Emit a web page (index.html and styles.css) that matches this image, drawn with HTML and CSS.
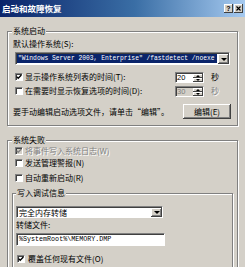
FILE: index.html
```html
<!DOCTYPE html>
<html lang="zh-CN">
<head>
    <meta charset="UTF-8">
    <meta name="viewport" content="width=device-width, initial-scale=1.0">
    <title>启动和故障恢复</title>
    <link rel="stylesheet" href="styles.css">
</head>
<body>
<div class="dialog">
    <div class="titlebar">
        <span class="title">启动和故障恢复</span>
        <div class="title-buttons">
            <span class="tbtn">?</span>
            <span class="tbtn">
                <svg width="5" height="5" viewBox="0 0 5 5"><path d="M0.5 0.5 L4.5 4.5 M4.5 0.5 L0.5 4.5" stroke="#000" stroke-width="1.1"/></svg>
            </span>
        </div>
    </div>

    <div class="content">
        <fieldset class="group group-startup">
            <legend>系统启动</legend>
            <div class="label">默认操作系统(S):</div>
            <div class="select select-os">
                <span class="select-value"><span class="selected">"Windows Server 2003, Enterprise" /fastdetect /noexe</span></span>
                <span class="drop-btn"><span class="arrow-down"></span></span>
            </div>
            <div class="row row-time">
                <span class="check checked">
                    <svg width="6" height="6" viewBox="0 0 6 6"><path d="M0.6 2.6 L2.2 4.3 L5.4 1" fill="none" stroke="#000" stroke-width="1.3"/></svg>
                </span>
                <span class="check-label">显示操作系统列表的时间(T):</span>
                <span class="spin">
                    <span class="spin-value">20</span>
                    <span class="spin-btns"><span class="spin-btn"><span class="arrow-up"></span></span><span class="spin-btn"><span class="arrow-down"></span></span></span>
                </span>
                <span class="unit">秒</span>
            </div>
            <div class="row row-recovery">
                <span class="check"></span>
                <span class="check-label">在需要时显示恢复选项的时间(D):</span>
                <span class="spin disabled">
                    <span class="spin-value">30</span>
                    <span class="spin-btns"><span class="spin-btn"><span class="arrow-up"></span></span><span class="spin-btn"><span class="arrow-down"></span></span></span>
                </span>
                <span class="unit disabled-text">秒</span>
            </div>
            <div class="row row-edit">
                <span class="hint">要手动编辑启动选项文件，请单击“编辑”。</span>
                <span class="button">编辑(E)</span>
            </div>
        </fieldset>

        <fieldset class="group group-failure">
            <legend>系统失败</legend>
            <div class="row row-small row-first">
                <span class="check checked disabled">
                    <svg width="6" height="6" viewBox="0 0 6 6"><path d="M0.6 2.6 L2.2 4.3 L5.4 1" fill="none" stroke="#808080" stroke-width="1.3"/></svg>
                </span>
                <span class="check-label disabled-text">将事件写入系统日志(W)</span>
            </div>
            <div class="row row-small row-alert">
                <span class="check"></span>
                <span class="check-label">发送管理警报(N)</span>
            </div>
            <div class="row row-small row-restart">
                <span class="check"></span>
                <span class="check-label">自动重新启动(R)</span>
            </div>

            <fieldset class="group group-debug">
                <legend>写入调试信息</legend>
                <div class="select select-dump">
                    <span class="select-value">完全内存转储</span>
                    <span class="drop-btn"><span class="arrow-down"></span></span>
                </div>
                <div class="label label-small">转储文件:</div>
                <div class="textbox">%SystemRoot%\MEMORY.DMP</div>
                <div class="row row-small row-overwrite">
                    <span class="check checked">
                        <svg width="6" height="6" viewBox="0 0 6 6"><path d="M0.6 2.6 L2.2 4.3 L5.4 1" fill="none" stroke="#000" stroke-width="1.3"/></svg>
                    </span>
                    <span class="check-label">覆盖任何现有文件(O)</span>
                </div>
            </fieldset>
        </fieldset>
    </div>
</div>
</body>
</html>
```

FILE: styles.css
```css
body {
    margin: 0;
    padding: 0;
    font-family: "Noto Sans CJK SC", "Liberation Sans", sans-serif;
    font-size: 8px;
    color: #000;
    background-color: #d4d0c8;
}

.dialog {
    width: 245px;
    height: 267px;
    overflow: hidden;
    background-color: #d4d0c8;
}

/* title bar */
.titlebar {
    height: 17px;
    box-sizing: border-box;
    padding: 0 2px 0 2px;
    display: flex;
    align-items: center;
    justify-content: space-between;
    background: linear-gradient(to right, #0a246a 0%, #3a6ea5 55%, #a6caf0 100%);
}

.title {
    color: white;
    font-weight: bold;
    font-size: 8.5px;
    line-height: 17px;
}

.title-buttons {
    display: flex;
    gap: 1px;
}

.tbtn {
    width: 9px;
    height: 9px;
    box-sizing: border-box;
    display: flex;
    align-items: center;
    justify-content: center;
    background-color: #d4d0c8;
    box-shadow: inset -1px -1px #404040, inset 1px 1px #fff;
    font-family: "Liberation Sans", sans-serif;
    font-weight: bold;
    font-size: 7px;
    line-height: 9px;
}

/* group boxes */
.content {
    padding: 8px 0 0 7px;
}

.group {
    margin: 0;
    border: 1px solid #808080;
    box-shadow: inset 1px 1px #fff, 1px 1px #fff;
    box-sizing: border-box;
    min-width: 0;
}

.group legend {
    padding: 0 1px;
    line-height: 12px;
    font-size: 8px;
    background-color: #d4d0c8;
}

.group-startup {
    width: 231px;
    padding: 1px 6px 6px 5px;
}

.group-startup legend {
    margin-left: -1px;
}

.group-failure {
    width: 231px;
    height: 200px;
    margin-top: 8px;
    padding: 0 4px 0 4px;
}

.group-debug {
    width: 221px;
    height: 100px;
    margin-top: 4px;
    padding: 7px 3px 0 3px;
}

.label {
    line-height: 12px;
}

.label-small {
    margin-top: 2px;
    line-height: 10px;
}

/* combo boxes and text fields */
.select, .textbox, .spin {
    box-sizing: border-box;
    border: 1px solid;
    border-color: #808080 #fff #fff #808080;
    box-shadow: inset 1px 1px #404040;
    background-color: white;
}

.select {
    display: flex;
}

.select-os {
    margin: 2px 1px 0 2px;
    height: 13px;
}

.select-dump {
    width: 147px;
    height: 12px;
}

.select-value {
    flex: 1;
    min-width: 0;
    overflow: hidden;
    white-space: nowrap;
    padding: 1px 1px 1px 2px;
    line-height: 9px;
}

.select-os .select-value {
    padding: 1px 1px 1px 1px;
}

.selected {
    display: block;
    height: 9px;
    padding-left: 1px;
    background-color: #0a246a;
    color: white;
    font-family: "Liberation Mono", monospace;
    font-size: 6.3px;
    line-height: 9px;
}

.drop-btn {
    width: 11px;
    margin: 1px 0 0 0;
    display: flex;
    align-items: center;
    justify-content: center;
    background-color: #d4d0c8;
    box-shadow: inset -1px -1px #404040, inset 1px 1px #fff, inset -2px -2px #808080;
}

.arrow-down {
    width: 0;
    height: 0;
    border-left: 3px solid transparent;
    border-right: 3px solid transparent;
    border-top: 3px solid #000;
}

.arrow-up {
    width: 0;
    height: 0;
    border-left: 2px solid transparent;
    border-right: 2px solid transparent;
    border-bottom: 2px solid #000;
}

.spin-btn .arrow-down {
    border-left-width: 2px;
    border-right-width: 2px;
    border-top-width: 2px;
}

.textbox {
    width: 149px;
    height: 13px;
    margin-top: 3px;
    padding: 0 2px;
    font-family: "Liberation Mono", monospace;
    font-size: 6.7px;
    line-height: 11px;
    white-space: nowrap;
}

/* rows with check boxes */
.row {
    display: flex;
    align-items: center;
}

.row-time {
    margin: 6px 0 0 2px;
    height: 12px;
}

.row-recovery {
    margin: 2px 0 0 2px;
    height: 12px;
}

.row-edit {
    margin-top: 7px;
    height: 15px;
}

.row-small {
    height: 10px;
    margin-left: 3px;
}

.row-alert {
    margin-top: 2px;
}

.row-restart {
    margin-top: 5px;
}

.row-overwrite {
    margin: 8px 0 0 1px;
}

.check {
    width: 8px;
    height: 8px;
    flex: none;
    box-sizing: border-box;
    display: flex;
    align-items: center;
    justify-content: center;
    border: 1px solid;
    border-color: #808080 #fff #fff #808080;
    box-shadow: inset 1px 1px #404040;
    background-color: white;
}

.check.disabled {
    background-color: #d4d0c8;
}

.check-label {
    flex: 1;
    margin-left: 2px;
    line-height: 10px;
    white-space: nowrap;
}

.row-overwrite .check-label {
    margin-left: 3px;
}

.disabled-text {
    color: #808080;
    text-shadow: 1px 1px #fff;
}

.spin {
    width: 29px;
    height: 11px;
    display: flex;
}

.spin.disabled {
    background-color: #d4d0c8;
    color: #808080;
}

.spin-value {
    flex: 1;
    padding-left: 1px;
    font-family: "Liberation Sans", sans-serif;
    font-size: 7.5px;
    line-height: 9px;
}

.spin-btns {
    width: 10px;
    margin-top: 1px;
    display: flex;
    flex-direction: column;
}

.spin-btn {
    flex: 1;
    display: flex;
    align-items: center;
    justify-content: center;
    background-color: #d4d0c8;
    box-shadow: inset -1px -1px #404040, inset 1px 1px #fff;
}

.unit {
    width: 27px;
    box-sizing: border-box;
    padding-left: 7px;
    line-height: 10px;
}

.hint {
    flex: 1;
    line-height: 10px;
    white-space: nowrap;
}

.button {
    width: 48px;
    height: 15px;
    box-sizing: border-box;
    text-align: center;
    line-height: 15px;
    background-color: #d4d0c8;
    box-shadow: inset -1px -1px #404040, inset 1px 1px #fff, inset -2px -2px #808080;
}
```
